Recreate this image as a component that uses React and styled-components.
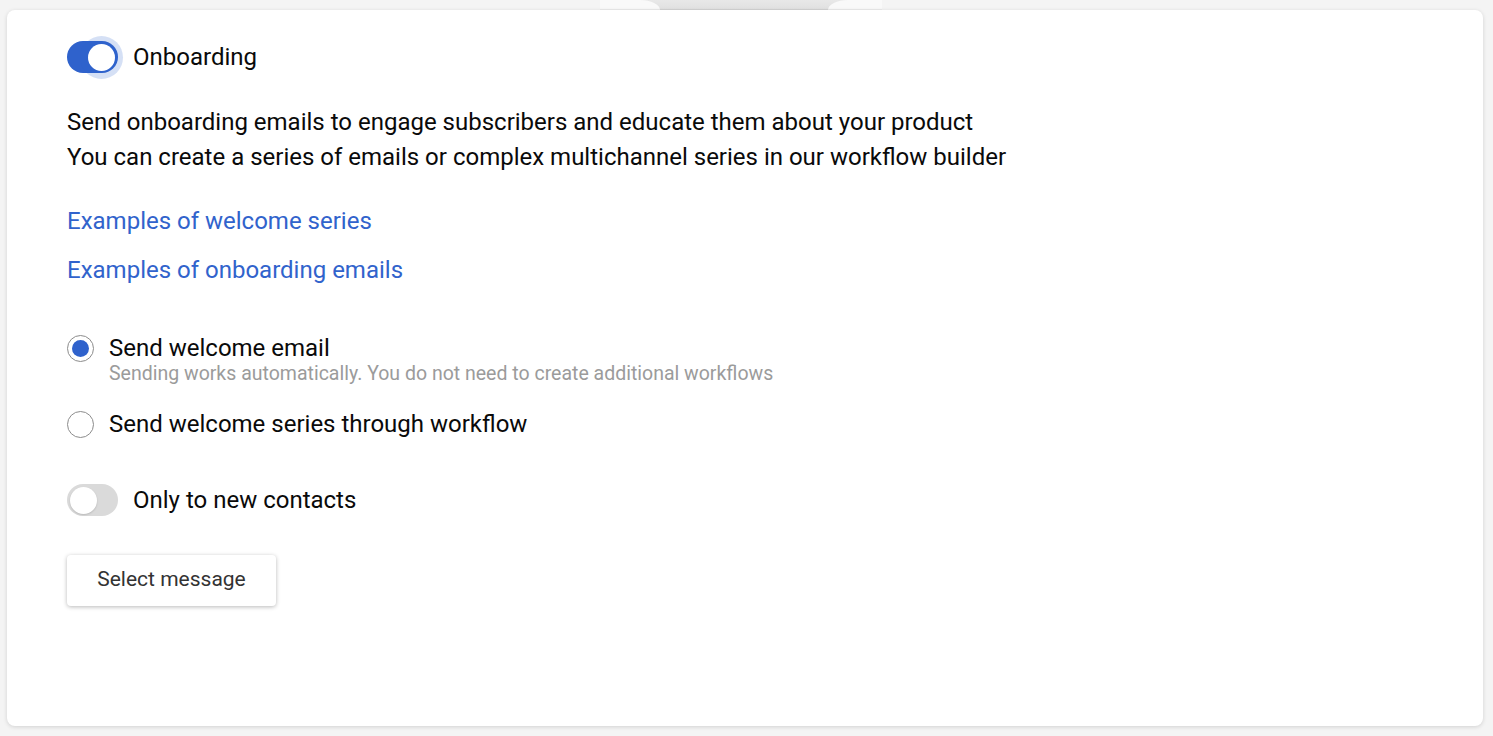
import React, { useState } from 'react'
import styled, { createGlobalStyle } from 'styled-components'

const GlobalStyle = createGlobalStyle`
	html, body {
		margin: 0;
		padding: 0;
		background: #f4f4f4;
		font-family: Roboto, "Liberation Sans", Arial, sans-serif;
		color: #0a0a0a;
	}
`

const Page = styled.div`
	width: 1493px;
	height: 736px;
	overflow: hidden;
	display: flex;
	flex-direction: column;
`

// strip above the card where the tab of the previous panel peeks out
const TabStrip = styled.div`
	height: 10px;
	display: flex;
	padding-left: 600px;
`
const TabBody = styled.div`
	width: 282px;
	height: 10px;
	display: flex;
	justify-content: space-between;
	background: linear-gradient(#e8e8e8, #e0e0e0);
	box-shadow: inset 0 -1px 0 #d4d4d4;
`
const TabEdge = styled.div`
	width: ${p => p.side === 'left' ? 60 : 54}px;
	height: 10px;
	background: #f9f9f9;
	box-shadow: inset 0 -1px 0 #ececec;
	border-top-${p => p.side === 'left' ? 'right' : 'left'}-radius: 28px 14px;
`

const Card = styled.section`
	margin-left: 7px;
	width: 1476px;
	height: 716px;
	box-sizing: border-box;
	background: #fff;
	border-radius: 8px;
	box-shadow: 0 1px 4px rgba(0, 0, 0, 0.14);
	padding: 24px 60px 0;
	display: flex;
	flex-direction: column;
	align-items: flex-start;
`

const SwitchRow = styled.label`
	display: flex;
	align-items: center;
	gap: 15px;
	height: ${p => p.tall ? '46px' : '32px'};
	margin-top: ${p => p.mt || 0}px;
	font-size: 24px;
	cursor: pointer;
`

const Track = styled.span`
	position: relative;
	width: 51px;
	height: 32px;
	border-radius: 16px;
	background: ${p => p.on ? '#2f62cc' : '#dadada'};
	flex-shrink: 0;
`

const Knob = styled.span`
	position: absolute;
	top: 3px;
	left: ${p => p.on ? '21px' : '3px'};
	width: 27px;
	height: 27px;
	border-radius: 50%;
	background: #fff;
	box-shadow: ${p => p.on ? '0 0 0 8px rgba(47, 98, 204, 0.2)' : '0 1px 2px rgba(0,0,0,0.15)'};
`

const Description = styled.p`
	margin: 25px 0 0;
	font-size: 24px;
	line-height: 35px;
`

const Links = styled.div`
	margin-top: 29px;
	display: flex;
	flex-direction: column;
	gap: 14px;
`

const LinkText = styled.a`
	font-size: 24px;
	line-height: 35px;
	color: #3163cc;
	text-decoration: none;
`

const RadioGroup = styled.div`
	margin-top: 45px;
	display: flex;
	flex-direction: column;
	gap: 24px;
`

const RadioRow = styled.label`
	display: grid;
	grid-template-columns: 27px auto;
	column-gap: 15px;
	align-items: center;
	cursor: pointer;
`

const RadioCircle = styled.span`
	width: 27px;
	height: 27px;
	box-sizing: border-box;
	border-radius: 50%;
	border: 1px solid #8c8c8c;
	display: flex;
	align-items: center;
	justify-content: center;
	&::after {
		content: '';
		width: 17px;
		height: 17px;
		border-radius: 50%;
		background: ${p => p.checked ? '#2f62cc' : 'transparent'};
	}
`

const RadioLabel = styled.span`
	font-size: 24px;
	line-height: 30px;
`

const RadioHint = styled.span`
	grid-column: 2;
	font-size: 19.5px;
	line-height: 22px;
	color: #9b9b9b;
`

const Button = styled.button`
	margin-top: 39px;
	width: 209px;
	height: 51px;
	padding: 0 0 3px;
	border: none;
	border-radius: 4px;
	background: #fff;
	box-shadow: 0 1px 4px rgba(0, 0, 0, 0.28);
	font-family: inherit;
	font-size: 21px;
	color: #333;
	cursor: pointer;
`

const Switch = ({ on }) => (
	<Track on={on}>
		<Knob on={on} />
	</Track>
)

export default function App() {
	const [choice, setChoice] = useState('email')

	return (
		<Page>
			<GlobalStyle />
			<TabStrip>
				<TabBody>
					<TabEdge side="left" />
					<TabEdge side="right" />
				</TabBody>
			</TabStrip>
			<Card>
				<SwitchRow tall>
					<Switch on />
					Onboarding
				</SwitchRow>

				<Description>
					Send onboarding emails to engage subscribers and educate them about your product<br />
					You can create a series of emails or complex multichannel series in our workflow builder
				</Description>

				<Links>
					<LinkText href="#">Examples of welcome series</LinkText>
					<LinkText href="#">Examples of onboarding emails</LinkText>
				</Links>

				<RadioGroup>
					<RadioRow onClick={() => setChoice('email')}>
						<RadioCircle checked={choice === 'email'} />
						<RadioLabel>Send welcome email</RadioLabel>
						<RadioHint>Sending works automatically. You do not need to create additional workflows</RadioHint>
					</RadioRow>
					<RadioRow onClick={() => setChoice('series')}>
						<RadioCircle checked={choice === 'series'} />
						<RadioLabel>Send welcome series through workflow</RadioLabel>
					</RadioRow>
				</RadioGroup>

				<SwitchRow mt={45}>
					<Switch />
					Only to new contacts
				</SwitchRow>

				<Button>Select message</Button>
			</Card>
		</Page>
	)
}
